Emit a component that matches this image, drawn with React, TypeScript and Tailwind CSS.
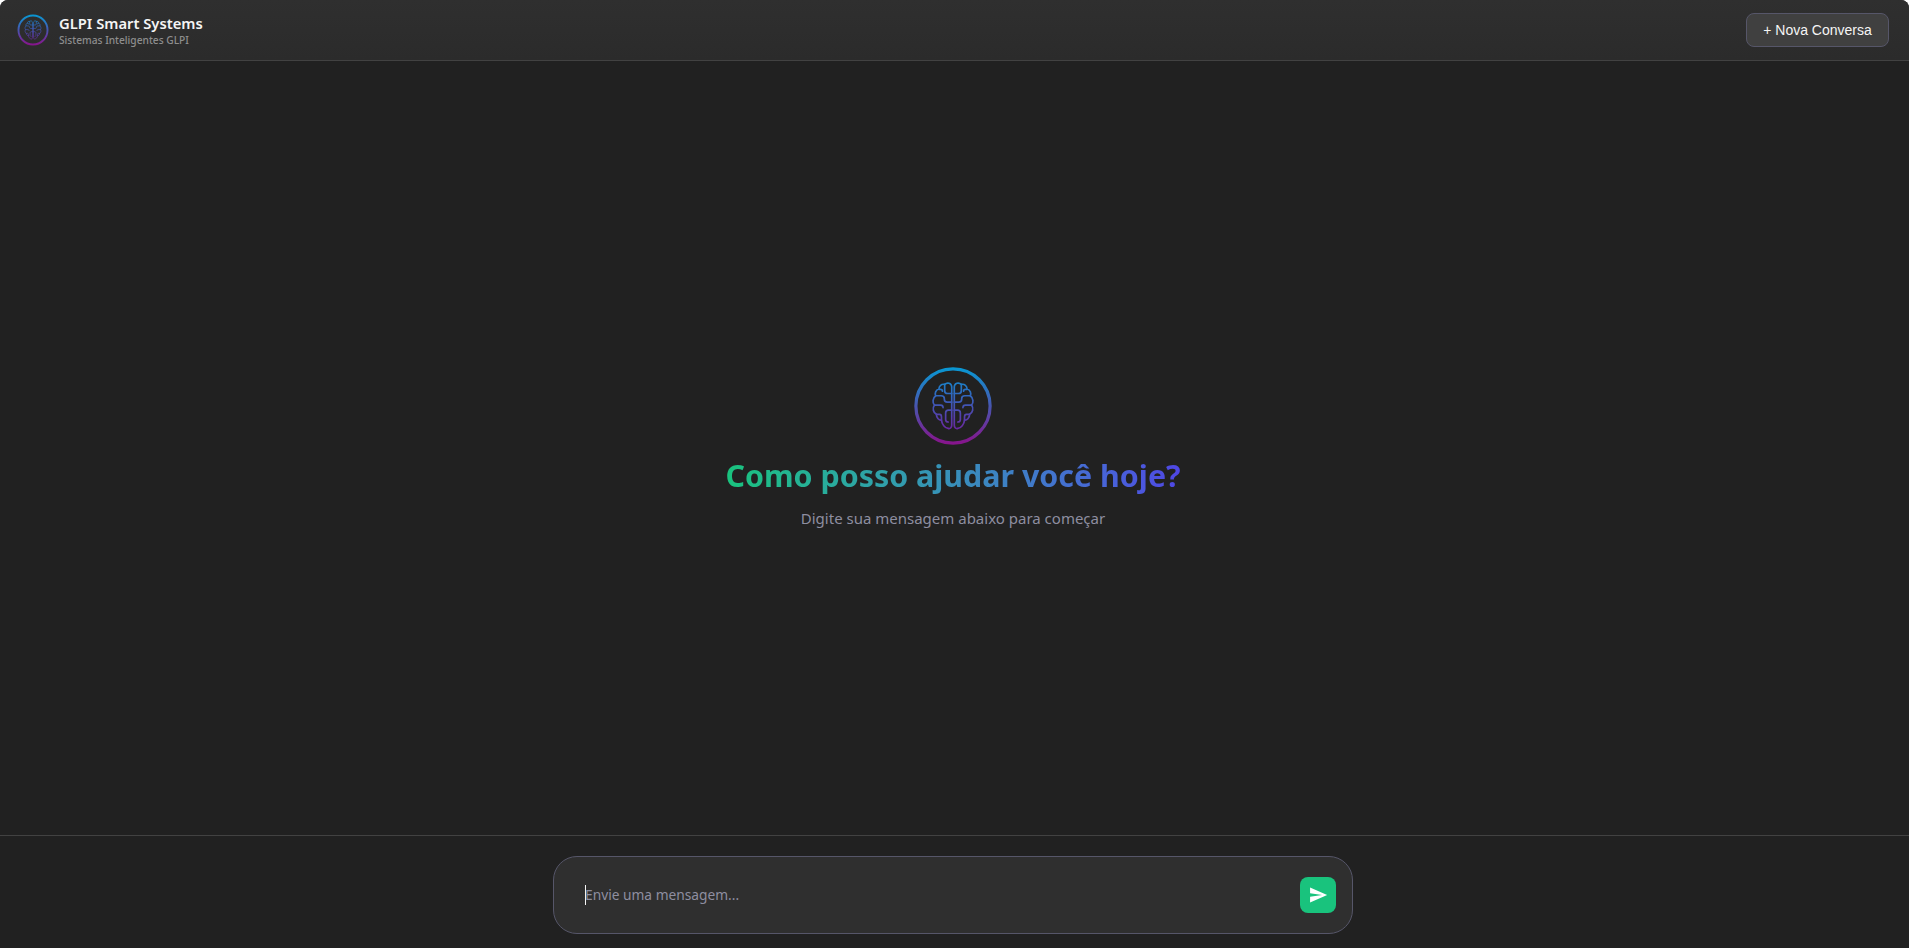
const HALF = [
  "M24.2 13C24 10.6 21.4 10 19.8 11.5C17.8 11 16.2 12.5 16.2 14.4C14.2 15 13.4 17 14.2 18.6C12.3 20 12 22.8 13.4 24.4C12 26.4 12.6 29.2 14.6 30.2C14.6 32.6 16.4 34 17.8 33.8C18 36.4 20 38.8 22 39C23.4 39.4 24.2 38.2 24.2 37Z",
  "M24.2 17.2H21.6C20.4 17.2 19.8 16.4 19.8 15.4V11.5",
  "M14.2 18.6H17.6C18.8 18.6 19.6 19.4 19.6 20.4V21C19.6 22 20.4 22.6 21.4 22.6H24.2",
  "M13.4 24.4H17.2C18.2 24.4 18.8 25 18.8 26",
  "M24.2 27.6H22.2C21 27.6 20.4 28.4 20.4 29.4V33.4C20.4 34.4 21 35 22 35",
  "M14.6 30.2H16.6C17.4 30.2 17.8 30.8 17.8 31.8V33.8",
  "M16.4 14.6H17.2C18 14.6 18.4 15 18.4 15.8",
];

function Logo({ id, className, sw }: { id: string; className: string; sw: number }) {
  return (
    <svg viewBox="0 0 50 50" fill="none" className={className}>
      <defs>
        <linearGradient id={id} x1="0" y1="0" x2="0" y2="1">
          <stop offset="0" stopColor="#0a96d2" />
          <stop offset="1" stopColor="#86158c" />
        </linearGradient>
        <linearGradient id={id + "b"} gradientUnits="userSpaceOnUse" x1="25" y1="10" x2="25" y2="40">
          <stop offset="0" stopColor="#1b80c8" />
          <stop offset="1" stopColor="#6b27a0" />
        </linearGradient>
      </defs>
      <circle cx="25" cy="25" r={24.2 - sw / 2} stroke={`url(#${id})`} strokeWidth={sw} />
      <g stroke={`url(#${id}b)`} strokeWidth="1.05" strokeLinecap="round" strokeLinejoin="round">
        {HALF.map((d) => (
          <path key={d} d={d} />
        ))}
        <g transform="translate(50 0) scale(-1 1)">
          {HALF.map((d) => (
            <path key={d} d={d} />
          ))}
        </g>
      </g>
    </svg>
  );
}

export default function App() {
  return (
    <div className="flex h-[948px] flex-col overflow-hidden rounded-t-[8px] bg-[#212121] font-['Noto_Sans','Open_Sans',sans-serif]">
      <header className="flex h-[61px] shrink-0 items-center justify-between border-b border-[#424242] bg-gradient-to-b from-[#2f2f2f] to-[#2b2b2b] pl-[17px] pr-[20px]">
        <div className="flex items-center gap-[10px]">
          <Logo id="a" className="h-[32px] w-[32px]" sw={3} />
          <div className="flex flex-col">
            <span className="text-[14.75px] leading-[18px] font-semibold text-[#f5f5f5]">GLPI Smart Systems</span>
            <span className="mt-[1px] text-[10.2px] leading-[14px] font-medium text-[#8e8e8e]">Sistemas Inteligentes GLPI</span>
          </div>
        </div>
        <button className="flex h-[34px] w-[143px] items-center justify-center rounded-[8px] border border-[#565669] bg-[#404040] font-['Liberation_Sans',sans-serif] text-[14px] text-[#f5f5f5]">
          + Nova Conversa
        </button>
      </header>
      <main className="flex flex-1 flex-col items-center justify-center pt-[2px] pr-[3px]">
        <Logo id="b" className="-mt-[2px] h-[80px] w-[80px]" sw={2} />
        <h1 className="mt-[10px] bg-gradient-to-r from-[#19c37d] to-[#4f46e5] bg-clip-text text-[30.4px] leading-[40px] font-bold text-transparent">
          Como posso ajudar você hoje?
        </h1>
        <p className="mt-[10px] text-[15px] leading-[24px] text-[#8e8ea0]">Digite sua mensagem abaixo para começar</p>
      </main>
      <footer className="flex h-[113px] shrink-0 justify-center border-t border-[#424242] pt-[20px] pr-[3px]">
        <div className="flex h-[78px] w-[800px] items-center rounded-[24px] border border-[#565669] bg-[#2f2f2f] pl-[31px] pr-[16px]">
          <span className="h-[20px] w-px bg-[#f5f5f5]" />
          <span className="-ml-[1px] mt-[1px] flex-1 text-[13.75px] text-[#8e8ea0]">Envie uma mensagem...</span>
          <button className="flex h-[36px] w-[36px] items-center justify-center rounded-[8px] bg-[#19c37d]">
            <svg viewBox="0 0 24 24" className="h-[20px] w-[20px]" fill="#fff">
              <path d="M2.5 21 23 12 2.5 3v7l14.5 2-14.5 2z" />
            </svg>
          </button>
        </div>
      </footer>
    </div>
  );
}
